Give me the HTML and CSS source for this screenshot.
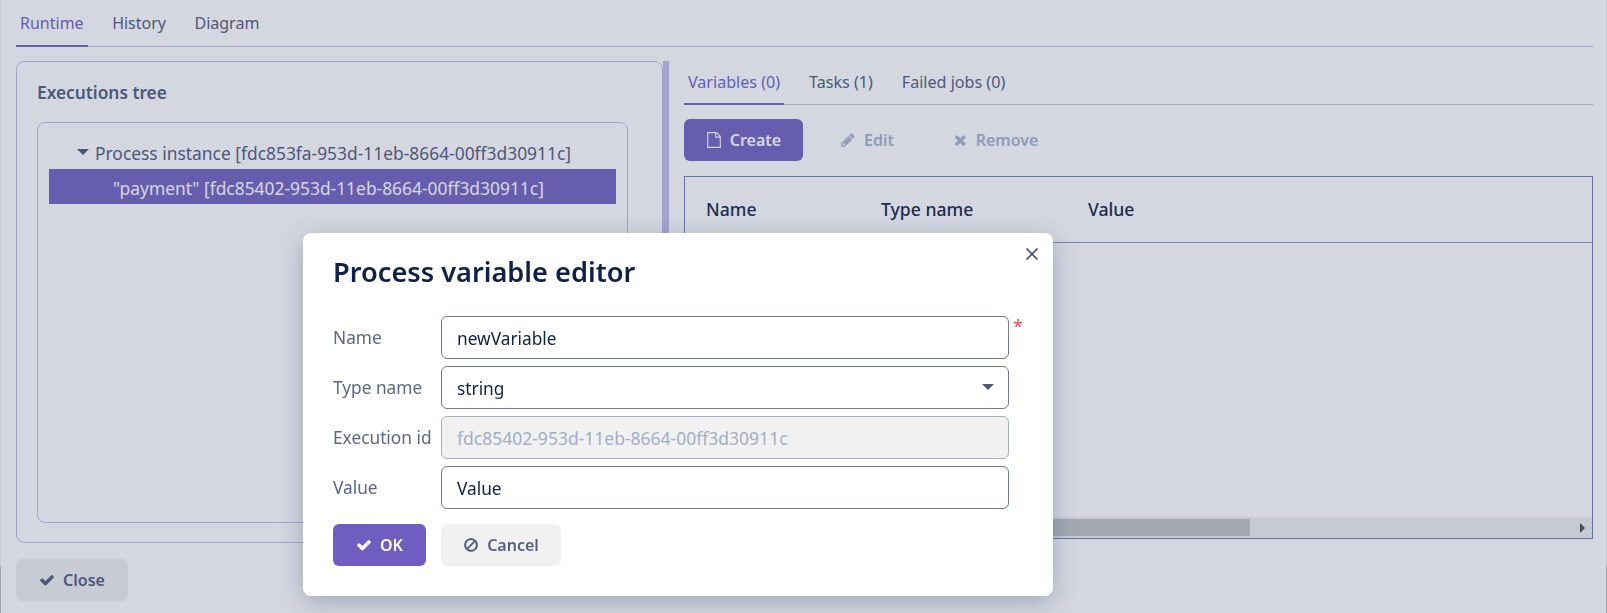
FILE: index.html
```html
<!DOCTYPE html>
<html lang="en">
<head>
    <meta charset="UTF-8">
    <title>Process instance</title>
    <link rel="stylesheet" href="styles.css">
</head>
<body>
    <svg class="defs" width="0" height="0">
        <symbol id="i-check" viewBox="0 0 1792 1792"><path d="M1671 566q0 40-28 68l-724 724-136 136q-28 28-68 28t-68-28l-136-136-362-362q-28-28-28-68t28-68l136-136q28-28 68-28t68 28l294 295 656-657q28-28 68-28t68 28l136 136q28 28 28 68z"/></symbol>
        <symbol id="i-times" viewBox="0 0 1792 1792"><path d="M1298 1322q0 40-28 68l-136 136q-28 28-68 28t-68-28l-294-294-294 294q-28 28-68 28t-68-28l-136-136q-28-28-28-68t28-68l294-294-294-294q-28-28-28-68t28-68l136-136q28-28 68-28t68 28l294 294 294-294q28-28 68-28t68 28l136 136q28 28 28 68t-28 68l-294 294 294 294q28 28 28 68z"/></symbol>
        <symbol id="i-pencil" viewBox="0 0 1792 1792"><path d="M491 1536l91-91-235-235-91 91v107h128v128h107zm523-928q0-22-22-22-10 0-17 7l-542 542q-7 7-7 17 0 22 22 22 10 0 17-7l542-542q7-7 7-17zm-54-192l416 416-832 832h-416v-416zm683 96q0 53-37 90l-166 166-416-416 166-165q36-38 90-38 53 0 91 38l235 234q37 39 37 91z"/></symbol>
        <symbol id="i-file" viewBox="0 0 1792 1792"><path d="M1596 380q28 28 48 76t20 88v1152q0 40-28 68t-68 28h-1344q-40 0-68-28t-28-68v-1600q0-40 28-68t68-28h896q40 0 88 20t76 48zm-444-244v376h376q-10-29-22-41l-313-313q-12-12-41-22zm384 1528v-1024h-416q-40 0-68-28t-28-68v-416h-768v1536h1280z"/></symbol>
        <symbol id="i-ban" viewBox="0 0 1792 1792"><path d="M1440 893q0-161-87-295l-754 753q137 89 297 89 111 0 211.5-43.5t173.5-116.5 116-174.5 43-212.5zm-999 299l755-754q-135-91-300-91-148 0-273 73t-198 199-73 274q0 162 89 299zm1223-299q0 157-61 300t-163.5 246-245 164-298.5 61-298.5-61-245-164-163.5-246-61-300 61-299.5 163.5-245.5 245-164 298.5-61 298.5 61 245 164 163.5 245.5 61 299.5z"/></symbol>
    </svg>

    <div class="page">
        <div class="tabs main-tabs">
            <span class="tab active">Runtime</span>
            <span class="tab">History</span>
            <span class="tab">Diagram</span>
        </div>

        <div class="split">
            <div class="panel">
                <div class="panel-title">Executions tree</div>
                <div class="tree">
                    <div class="tree-row"><span class="caret"></span>Process instance [fdc853fa-953d-11eb-8664-00ff3d30911c]</div>
                    <div class="tree-row selected">"payment" [fdc85402-953d-11eb-8664-00ff3d30911c]</div>
                </div>
            </div>
            <div class="splitter"></div>
            <div class="details">
                <div class="tabs sub-tabs">
                    <span class="tab active">Variables (0)</span>
                    <span class="tab">Tasks (1)</span>
                    <span class="tab">Failed jobs (0)</span>
                </div>
                <div class="toolbar">
                    <button class="btn primary create"><svg class="icon"><use href="#i-file"/></svg>Create</button>
                    <button class="btn ghost edit"><svg class="icon"><use href="#i-pencil"/></svg>Edit</button>
                    <button class="btn ghost remove"><svg class="icon"><use href="#i-times"/></svg>Remove</button>
                </div>
                <div class="grid">
                    <div class="grid-head">
                        <span class="col-name">Name</span>
                        <span class="col-type">Type name</span>
                        <span>Value</span>
                    </div>
                    <div class="grid-body"></div>
                    <div class="scrollbar">
                        <div class="thumb"></div>
                        <span class="arrow"></span>
                    </div>
                </div>
            </div>
        </div>

        <button class="btn plain close-btn"><svg class="icon"><use href="#i-check"/></svg>Close</button>
    </div>

    <div class="overlay"></div>

    <div class="modal">
        <svg class="modal-close" viewBox="0 0 14 14"><path d="M1.5 1.5l11 11M12.5 1.5l-11 11"/></svg>
        <h2>Process variable editor</h2>
        <div class="form">
            <label>Name</label>
            <div class="field">newVariable<span class="req">*</span></div>
            <label>Type name</label>
            <div class="field">string<span class="caret select-caret"></span></div>
            <label>Execution id</label>
            <div class="field disabled">fdc85402-953d-11eb-8664-00ff3d30911c</div>
            <label>Value</label>
            <div class="field">Value</div>
        </div>
        <div class="actions">
            <button class="btn ok"><svg class="icon"><use href="#i-check"/></svg>OK</button>
            <button class="btn cancel"><svg class="icon"><use href="#i-ban"/></svg>Cancel</button>
        </div>
    </div>
</body>
</html>
```

FILE: styles.css
```css
* {
    box-sizing: border-box;
}
html, body {
    height: 100%;
}
body {
    margin: 0;
    background: #fff;
    color: #1c2a4a;
    font-family: "Noto Sans", sans-serif;
    font-size: 16px;
    overflow: hidden;
}
.defs {
    position: absolute;
}
.icon {
    width: 16px;
    height: 16px;
    fill: currentColor;
    flex: none;
}
.page {
    height: 613px;
    padding: 0 13px 0 15px;
    border-right: 1px solid #f1f1f1;
    border-left: 1px solid;
    border-image: linear-gradient(#f1f1f1 565px, #bcbcbc 565px) 1;
    display: flex;
    flex-direction: column;
}

/* tabs */
.tabs {
    display: flex;
    border-bottom: 1px solid #c2c0e6;
    color: #57617f;
}
.main-tabs {
    height: 47px;
    gap: 20.5px;
}
.tab {
    padding: 0 4px;
    line-height: 47px;
    margin-bottom: -1px;
    border-bottom: 2px solid transparent;
}
.tab.active {
    color: #7767c2;
    border-bottom-color: #7767c2;
}
.sub-tabs {
    height: 44px;
    gap: 21px;
    font-size: 16.1px;
}
.sub-tabs .tab {
    line-height: 42px;
}

/* left side */
.split {
    display: flex;
    margin-top: 14px;
    height: 482px;
}
.panel {
    width: 647px;
    flex: none;
    border: 1px solid #c2c0e6;
    border-radius: 8px;
    padding: 0 34px 19px 20px;
    display: flex;
    flex-direction: column;
}
.panel-title {
    font-size: 17.3px;
    font-weight: 600;
    color: #57617f;
    line-height: 62px;
    height: 60px;
}
.tree {
    flex: 1;
    border: 1px solid #c2c0e6;
    border-radius: 8px;
    padding: 15px 11px;
    font-size: 17.4px;
}
.tree-row {
    height: 31px;
    line-height: 30px;
    color: #57617f;
    padding-left: 46px;
    position: relative;
}
.tree-row.selected {
    height: 35px;
    line-height: 38px;
    background: #7767c2;
    color: #fff;
    padding-left: 64px;
}
.caret {
    width: 0;
    height: 0;
    border-left: 6px solid transparent;
    border-right: 6px solid transparent;
    border-top: 6px solid #4f5b7c;
    position: absolute;
    left: 28px;
    top: 11px;
}
.splitter {
    width: 6px;
    flex: none;
    background: #c2c0e6;
}

/* right side */
.details {
    flex: 1;
    padding-left: 15px;
    min-width: 0;
    display: flex;
    flex-direction: column;
}
.toolbar {
    display: flex;
    gap: 14px;
    margin-top: 14px;
}
.btn {
    height: 42px;
    display: inline-flex;
    align-items: center;
    justify-content: center;
    gap: 8px;
    border: none;
    border-radius: 6px;
    font: 600 16px "Noto Sans", sans-serif;
    padding: 0 20px;
}
.primary {
    background: #7767c2;
    color: #fff;
    width: 119px;
}
.ghost {
    background: none;
    color: #aab4cb;
}
.edit {
    width: 100px;
}
.remove {
    width: 130px;
    gap: 6px;
}
.grid {
    flex: 1;
    margin-top: 15px;
    margin-bottom: 4px;
    border: 1px solid #7482ab;
    display: flex;
    flex-direction: column;
}
.grid-head {
    height: 66px;
    flex: none;
    display: flex;
    align-items: center;
    padding: 0 21px 1px;
    font-size: 17.6px;
    font-weight: 500;
    color: #1c2a4a;
    border-bottom: 1px solid #8c96b4;
}
.col-name {
    width: 175px;
}
.col-type {
    width: 207px;
}
.grid-body {
    flex: 1;
}
.scrollbar {
    height: 21px;
    flex: none;
    background: #edefef;
    padding: 2px 0;
    position: relative;
}
.thumb {
    width: 565px;
    height: 17px;
    background: #c4c5c7;
}
.arrow {
    position: absolute;
    right: 7px;
    top: 6px;
    border-left: 5px solid #505050;
    border-top: 5px solid transparent;
    border-bottom: 5px solid transparent;
}
.close-btn {
    align-self: flex-start;
    margin-top: 16px;
    width: 112px;
}
.plain {
    background: #f0f0f0;
    color: #57617f;
}

/* dialog */
.overlay {
    position: fixed;
    inset: 0;
    background: rgba(40, 55, 100, 0.2);
}
.modal {
    position: fixed;
    left: 303px;
    top: 233px;
    width: 750px;
    height: 363px;
    background: #fff;
    border-radius: 8px;
    box-shadow: 0 6px 24px rgba(40, 55, 100, 0.3);
    padding: 0 30px;
}
.modal h2 {
    margin: 0;
    font-size: 27.2px;
    font-weight: 600;
    color: #0f2148;
    line-height: 36px;
    padding-top: 21px;
    height: 83px;
}
.modal-close {
    position: absolute;
    right: 14px;
    top: 14px;
    width: 14px;
    height: 14px;
    fill: none;
    stroke: #3a4a6e;
    stroke-width: 1.6;
}
.form {
    display: grid;
    grid-template-columns: 108px 568px;
    row-gap: 7px;
    align-items: center;
}
.form label {
    font-size: 17.3px;
    color: #5c6784;
    padding-bottom: 1px;
}
.field {
    height: 43px;
    border: 1px solid #6c789f;
    border-radius: 6px;
    line-height: 43px;
    padding: 0 15px;
    font-size: 17.3px;
    color: #0f2148;
    position: relative;
}
.field.disabled {
    background: #f1f1f1;
    border-color: #a3adc6;
    color: #a3adc6;
    font-size: 17.5px;
}
.req {
    position: absolute;
    left: 571px;
    top: -12px;
    font-size: 18px;
    color: #f0464e;
}
.select-caret {
    left: auto;
    right: 14px;
    top: 17px;
}
.actions {
    display: flex;
    gap: 15px;
    margin-top: 15px;
}
.ok {
    width: 93px;
    background: #6f5dc0;
    color: #fff;
}
.cancel {
    width: 120px;
    background: #f1f1f1;
    color: #57617f;
}
```
